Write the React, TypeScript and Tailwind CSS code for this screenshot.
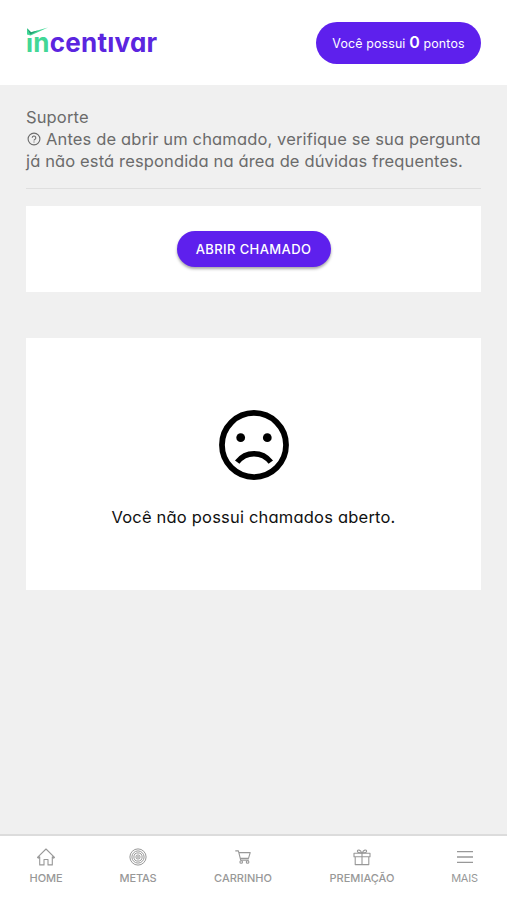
import React from 'react';

const NAV_ITEMS = [
  { label: 'HOME', icon: <HomeIcon />, pos: 'ml-[29px] w-[34px]', text: 'font-medium tracking-[-0.1px]' },
  { label: 'METAS', icon: <TargetIcon />, pos: 'ml-[56px] w-[38px]', text: 'font-medium tracking-[-0.2px]' },
  { label: 'CARRINHO', icon: <CartIcon />, pos: 'ml-[57px] w-[58px]', text: 'font-medium' },
  { label: 'PREMIAÇÃO', icon: <GiftIcon />, pos: 'ml-[57px] w-[66px]', text: 'font-medium' },
  { label: 'MAIS', icon: <MenuIcon />, pos: 'ml-[56px] w-[27px]', text: 'font-normal tracking-[-0.2px]' },
];

export default function App() {
  return (
    <div className="flex h-[900px] w-full flex-col bg-[#f0f0f0] font-['Inter','Noto_Sans',sans-serif] [font-feature-settings:'cv11']">
      <header className="flex h-[85px] shrink-0 items-start justify-between bg-white px-[26px] pt-[22px]">
        <Logo />
        <div className="flex h-[42px] w-[165px] items-center justify-center rounded-full bg-[#5e20ed] text-[12.4px] tracking-[0.15px] whitespace-pre text-white">
          <p className="leading-[20px]">
            Você possui <span className="text-[16px] font-semibold">0</span> pontos
          </p>
        </div>
      </header>

      <main className="flex-1 px-[26px] pt-[21px]">
        <div className="text-[16.5px] leading-[22px] tracking-[0.14px] whitespace-nowrap text-[#6b6b6b]">
          <h1>Suporte</h1>
          <p className="flex items-center">
            <HelpIcon />
            <span className="ml-[5px]">Antes de abrir um chamado, verifique se sua pergunta</span>
          </p>
          <p>já não está respondida na área de dúvidas frequentes.</p>
        </div>
        <hr className="mt-[16px] border-[#dfdfdf]" />

        <section className="mt-[17px] flex h-[86px] items-center justify-center bg-white">
          <button className="h-[36px] w-[154px] rounded-full bg-[#5e20ed] pt-px text-[13px] font-medium tracking-[0.4px] whitespace-nowrap text-white shadow-[0_2px_3px_rgba(0,0,0,0.35)]">
            ABRIR CHAMADO
          </button>
        </section>

        {/* Empty state */}
        <section className="mt-[46px] flex h-[252px] flex-col items-center bg-white pt-[65px]">
          <SadIcon />
          <p className="mt-[18px] text-[16.5px] leading-[24px] tracking-[0.2px] whitespace-nowrap text-[#111]">Você não possui chamados aberto.</p>
        </section>
      </main>

      <nav className="flex h-[66px] shrink-0 border-t-2 border-[#dcdcdc] bg-white pt-[12px] text-[#989898]">
        {NAV_ITEMS.map((item) => (
          <a key={item.label} className={`flex shrink-0 flex-col items-center ${item.pos}`}>
            {item.icon}
            <span className={`mt-[4px] text-[11px] leading-[16px] whitespace-nowrap ${item.text}`}>{item.label}</span>
          </a>
        ))}
      </nav>
    </div>
  );
}

function Logo() {
  return (
    <div className="relative h-[42px] w-[132px] text-[26px] leading-[41px] font-bold tracking-[0.25px] whitespace-nowrap text-[#5b25df]">
      <span className="text-[#42d796]">ın</span>centıvar
      <svg className="absolute top-[5px] left-[1px]" width="22" height="11" viewBox="0 0 22 11">
        <path d="M0 8.2 L5 10 L5 11 L0 11Z" fill="#fff" />
        <path d="M0 1.2 L4 5.2 L21 .6 L3.6 8.6 L0 7.4Z" fill="#42d796" />
        <path d="M0 1.2 L4 5.2 L11 3.4 L3.4 7.6Z" fill="#249b72" />
      </svg>
    </div>
  );
}

function HelpIcon() {
  return (
    <svg width="15" height="14" viewBox="0 0 15 14" fill="none" stroke="currentColor" strokeWidth="1.1">
      <circle cx="8" cy="7" r="5.9" />
      <path d="M6.2 5.8a1.8 1.8 0 1 1 2.6 1.6c-.6.3-.8.6-.8 1.2M8 9.4v1.1" />
    </svg>
  );
}

function SadIcon() {
  return (
    <svg width="84" height="84" viewBox="0 0 24 24" fill="currentColor">
      <circle cx="12" cy="12" r="9.15" fill="none" stroke="currentColor" strokeWidth="1.65" />
      <circle cx="8.2" cy="9.9" r="1.25" />
      <circle cx="15.8" cy="9.9" r="1.25" />
      <path d="M7.2 16.9c2.5-3.2 7.1-3.2 9.6 0" fill="none" stroke="currentColor" strokeWidth="1.6" />
    </svg>
  );
}

function HomeIcon() {
  return (
    <svg width="20" height="18" viewBox="0 0 20 18" fill="none" stroke="currentColor" strokeWidth="1.1" strokeLinejoin="round">
      <path d="M1.5 9.4 10 1l8.5 8.4-.8.8-1.4-1.3v8H12v-5.4H8v5.4H3.7v-8l-1.4 1.3Z" />
    </svg>
  );
}

function TargetIcon() {
  return (
    <svg width="20" height="18" viewBox="0 0 20 18" fill="none" stroke="currentColor" strokeWidth="1">
      <circle cx="10" cy="9" r="8.1" />
      <circle cx="10" cy="9" r="6.1" />
      <circle cx="10" cy="9" r="4.1" />
      <circle cx="10" cy="9" r="2.1" />
      <circle cx="10" cy="9" r=".5" />
    </svg>
  );
}

function CartIcon() {
  return (
    <svg width="20" height="18" viewBox="0 0 20 18" fill="none" stroke="currentColor" strokeWidth="1.1" strokeLinejoin="round">
      <path d="M2.3 2.9h3.1l2.3 9.2h8.1M6 4.6h11.2l-1.7 5.8H7.3" />
      <circle cx="8.2" cy="14" r="1.3" />
      <circle cx="14.6" cy="14" r="1.3" />
    </svg>
  );
}

function GiftIcon() {
  return (
    <svg width="20" height="18" viewBox="0 0 20 18" fill="none" stroke="currentColor" strokeWidth="1.1" strokeLinejoin="round">
      <path d="M2 5.2h16v3.5H2ZM3.2 8.7h13.6v7.9H3.2ZM10 5.2v11.4" />
      <path d="M9.7 5C8.6 1.5 5.4 1.4 5.4 3.3 5.4 4.6 7 5 9.7 5Zm.6 0c1.1-3.5 4.3-3.6 4.3-1.7 0 1.3-1.6 1.7-4.3 1.7Z" />
    </svg>
  );
}

function MenuIcon() {
  return (
    <svg width="20" height="18" viewBox="0 0 20 18" fill="none" stroke="currentColor" strokeWidth="1.3">
      <path d="M2 3.6h16M2 9h16M2 14.4h16" />
    </svg>
  );
}
